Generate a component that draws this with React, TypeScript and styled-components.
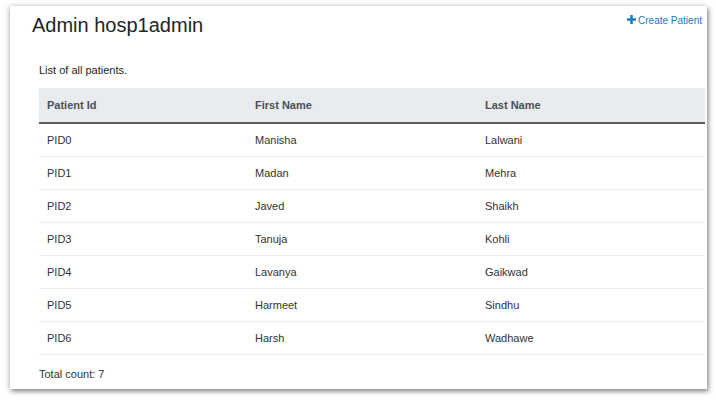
import styled, { createGlobalStyle } from "styled-components";

const GlobalStyle = createGlobalStyle`
  html, body {
    margin: 0;
    padding: 0;
    background: #ffffff;
  }
  body {
    font-family: "Liberation Sans", Arial, sans-serif;
    color: #212529;
  }
`;

const patients = [
  { id: "PID0", first: "Manisha", last: "Lalwani" },
  { id: "PID1", first: "Madan", last: "Mehra" },
  { id: "PID2", first: "Javed", last: "Shaikh" },
  { id: "PID3", first: "Tanuja", last: "Kohli" },
  { id: "PID4", first: "Lavanya", last: "Gaikwad" },
  { id: "PID5", first: "Harmeet", last: "Sindhu" },
  { id: "PID6", first: "Harsh", last: "Wadhawe" },
];

const Page = styled.div`
  padding: 6px 9px 13px 10px;
`;

const Card = styled.div`
  background: #fff;
  height: 383px;
  box-sizing: border-box;
  padding: 0 2px 0 29px;
  box-shadow: 0 1px 6px rgba(0, 0, 0, 0.35), 2px 3px 4px rgba(0, 0, 0, 0.25);
  display: flex;
  flex-direction: column;
`;

const Header = styled.div`
  display: flex;
  justify-content: space-between;
  align-items: flex-start;
`;

const Title = styled.h1`
  margin: 7px 0 0 -7px;
  font-size: 20px;
  font-weight: 400;
  line-height: 25px;
  color: #212529;
`;

const CreateLink = styled.a`
  margin-top: 9px;
  margin-right: 3px;
  display: flex;
  align-items: center;
  gap: 2px;
  font-size: 10px;
  color: #1a7bc4;
  text-decoration: none;
  cursor: pointer;
`;

const Caption = styled.div`
  margin-top: 25px;
  font-size: 11px;
  line-height: 14px;
`;

const Table = styled.table`
  margin-top: 11px;
  width: 666px;
  border-collapse: collapse;
  font-size: 11px;
`;

const HeadCell = styled.th<{ $w: number }>`
  width: ${(p) => p.$w}px;
  height: 35px;
  box-sizing: border-box;
  padding: 0 8px;
  text-align: left;
  font-weight: 700;
  color: #495057;
  background: #e9ecef;
  border-bottom: 2px solid #5a5d60;
`;

const Cell = styled.td`
  height: 33px;
  box-sizing: border-box;
  padding: 0 8px;
  color: #333;
  border-bottom: 1px solid #eceeef;
`;

const Footer = styled.div`
  margin-top: 13px;
  font-size: 11px;
  color: #333;
`;

const PlusIcon = () => (
  <svg width="9" height="9" viewBox="0 0 10 10" style={{ marginTop: -3 }}>
    <path d="M3.6 0h2.8v3.6H10v2.8H6.4V10H3.6V6.4H0V3.6h3.6z" fill="#1a7bc4" />
  </svg>
);

export default function App() {
  return (
    <>
      <GlobalStyle />
      <Page>
        <Card>
          <Header>
            <Title>Admin hosp1admin</Title>
            <CreateLink>
              <PlusIcon />
              Create Patient
            </CreateLink>
          </Header>
          <Caption>List of all patients.</Caption>
          <Table>
            <thead>
              <tr>
                <HeadCell $w={208}>Patient Id</HeadCell>
                <HeadCell $w={230}>First Name</HeadCell>
                <HeadCell $w={228}>Last Name</HeadCell>
              </tr>
            </thead>
            <tbody>
              {patients.map((p) => (
                <tr key={p.id}>
                  <Cell>{p.id}</Cell>
                  <Cell>{p.first}</Cell>
                  <Cell>{p.last}</Cell>
                </tr>
              ))}
            </tbody>
          </Table>
          <Footer>Total count: 7</Footer>
        </Card>
      </Page>
    </>
  );
}
